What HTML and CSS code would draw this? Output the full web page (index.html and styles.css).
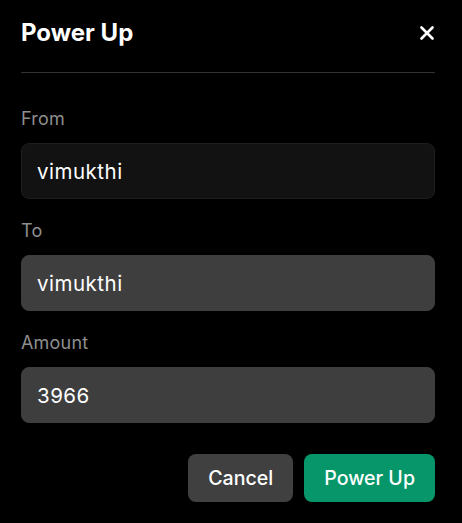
FILE: index.html
```html
<!DOCTYPE html>
<html lang="en">

<head>
    <meta charset="UTF-8">
    <meta name="viewport" content="width=device-width, initial-scale=1.0">
    <title>Power Up</title>
    <link rel="stylesheet" href="styles.css">
</head>

<body>
    <div class="modal">
        <div class="modal-header">
            <h2 class="modal-title">Power Up</h2>
            <button type="button" class="close-btn" aria-label="Close">
                <svg width="14" height="14" viewBox="0 0 14 14">
                    <path d="M1.5 1.5 L12.5 12.5 M12.5 1.5 L1.5 12.5" stroke="#fff" stroke-width="2.6" stroke-linecap="round" fill="none" />
                </svg>
            </button>
        </div>

        <form class="power-form">
            <div class="field">
                <label for="from">From</label>
                <input type="text" id="from" class="input input-readonly" value="vimukthi" readonly>
            </div>

            <div class="field">
                <label for="to">To</label>
                <input type="text" id="to" class="input" value="vimukthi">
            </div>

            <div class="field">
                <label for="amount">Amount</label>
                <input type="text" id="amount" class="input" value="3966">
            </div>

            <div class="actions">
                <button type="button" class="btn btn-cancel">Cancel</button>
                <button type="submit" class="btn btn-primary">Power Up</button>
            </div>
        </form>
    </div>
</body>

</html>
```

FILE: styles.css
```css
body {
    font-family: Inter, "Noto Sans", sans-serif;
    background-color: #000;
    color: #fff;
    margin: 0;
    padding: 0;
}

.modal {
    width: 414px;
    padding: 17px 0 0 21px;
}

.modal-header {
    display: flex;
    align-items: center;
    justify-content: space-between;
    padding-bottom: 23px;
    border-bottom: 1px solid #333;
}

.modal-title {
    margin: 0;
    font-size: 24px;
    line-height: 32px;
    font-weight: 700;
}

.close-btn {
    display: flex;
    background: none;
    border: none;
    padding: 0;
    margin-right: 1px;
    cursor: pointer;
}

.power-form {
    display: flex;
    flex-direction: column;
    gap: 20px;
    padding-top: 34px;
}

.field {
    display: flex;
    flex-direction: column;
    gap: 12px;
}

label {
    font-size: 18px;
    line-height: 24px;
    color: #8e8e8e;
    letter-spacing: 0.2px;
}

.input {
    height: 56px;
    box-sizing: border-box;
    padding: 0 15px;
    background: #3e3e3e;
    border: 1px solid #3e3e3e;
    border-radius: 8px;
    color: #fff;
    font-family: inherit;
    font-size: 20.5px;
    letter-spacing: 0.5px;
    outline: none;
}

.input-readonly {
    background: #121212;
    border-color: #1e1e1e;
}

.actions {
    display: flex;
    justify-content: flex-end;
    gap: 11px;
    padding-top: 11px;
}

.btn {
    height: 48px;
    padding: 0 20px;
    border: none;
    border-radius: 8px;
    color: #fff;
    font-family: inherit;
    font-size: 19.6px;
    font-weight: 500;
    cursor: pointer;
}

.btn-cancel {
    background: #404040;
}

.btn-primary {
    background: #069669;
}
```
